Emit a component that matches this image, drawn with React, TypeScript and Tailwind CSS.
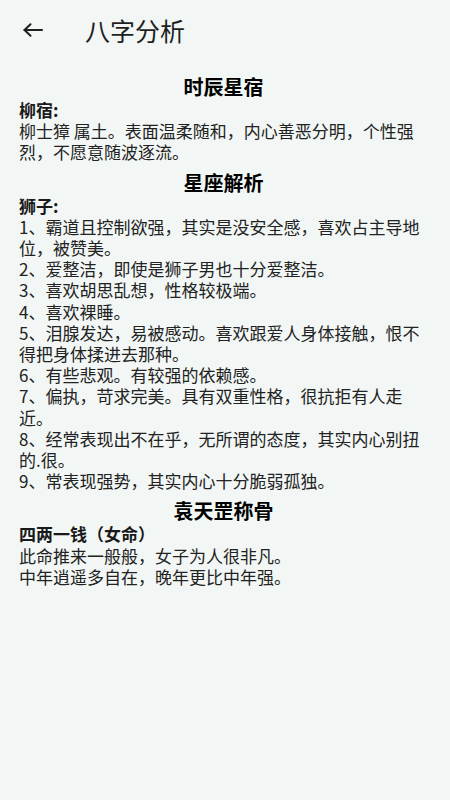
const font = { fontFamily: '"Noto Sans CJK SC", "Noto Sans", sans-serif' };

const sections = [
  {
    title: "时辰星宿",
    label: "柳宿:",
    lines: ["柳士獐 属土。表面温柔随和，内心善恶分明，个性强烈，不愿意随波逐流。"],
  },
  {
    title: "星座解析",
    label: "狮子:",
    lines: [
      "1、霸道且控制欲强，其实是没安全感，喜欢占主导地位，被赞美。",
      "2、爱整洁，即使是狮子男也十分爱整洁。",
      "3、喜欢胡思乱想，性格较极端。",
      "4、喜欢裸睡。",
      "5、泪腺发达，易被感动。喜欢跟爱人身体接触，恨不得把身体揉进去那种。",
      "6、有些悲观。有较强的依赖感。",
      "7、偏执，苛求完美。具有双重性格，很抗拒有人走近。",
      "8、经常表现出不在乎，无所谓的态度，其实内心别扭的.很。",
      "9、常表现强势，其实内心十分脆弱孤独。",
    ],
  },
  {
    title: "袁天罡称骨",
    label: "四两一钱（女命）",
    lines: ["此命推来一般般，女子为人很非凡。", "中年逍遥多自在，晚年更比中年强。"],
  },
];

function BackArrow() {
  return (
    <svg width="20" height="14" viewBox="0 0 20 14" fill="none" stroke="#1f1f1f" strokeWidth="2" strokeLinecap="round" strokeLinejoin="round">
      <path d="M1.5 7H19" />
      <path d="M7.5 1.2L1.5 7l6 5.8" />
    </svg>
  );
}

export default function App() {
  return (
    <div className="min-h-[800px] w-full bg-[#f2f7f5]" style={font}>
      <header className="flex h-[60px] items-center">
        <div className="ml-[23px] flex w-[20px] items-center">
          <BackArrow />
        </div>
        <h1 className="ml-[42px] text-[25px] leading-none text-[#1f1f1f]">八字分析</h1>
      </header>

      <main className="pl-[19px] pr-[22px] pt-[15px]">
        {sections.map((section, index) => (
          <section key={section.title} className={index === 0 ? "" : "mt-[8px]"}>
            <h2 className="text-center text-[20px] font-bold leading-[24px] text-black">{section.title}</h2>
            <p className="text-[17px] font-bold leading-[21.2px] text-[#1a1a1a]">{section.label}</p>
            {section.lines.map((line) => (
              <p key={line} className="text-[17px] leading-[21.2px] text-[#222]">
                {line}
              </p>
            ))}
          </section>
        ))}
      </main>
    </div>
  );
}
